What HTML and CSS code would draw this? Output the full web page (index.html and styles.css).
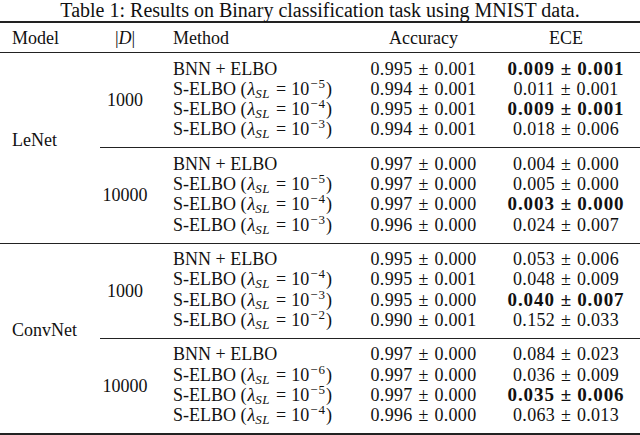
FILE: index.html
```html
<!DOCTYPE html>
<html>
<head>
<meta charset="utf-8">
<link rel="stylesheet" href="styles.css">
</head>
<body>
<div class="caption">Table 1: Results on Binary classification task using MNIST data.</div>
<table class="results">
  <colgroup>
    <col class="w-model"><col class="w-size"><col class="w-method"><col class="w-acc"><col class="w-ece">
  </colgroup>
  <thead>
    <tr>
      <th class="c-model">Model</th>
      <th class="c-size">|<i class="cal">D</i>|</th>
      <th class="c-method">Method</th>
      <th class="c-num">Accuracy</th>
      <th class="c-num">ECE</th>
    </tr>
  </thead>
  <tbody>
    <tr class="gstart">
      <td rowspan="8" class="c-model">LeNet</td>
      <td rowspan="4" class="c-size">1000</td>
      <td class="c-method">BNN + ELBO</td>
      <td class="c-num"><span class="m">0.995<span class="pm">±</span>0.001</span></td>
      <td class="c-num"><span class="m b">0.009<span class="pm">±</span>0.001</span></td>
    </tr>
    <tr>
      <td class="c-method">S-ELBO (<i class="lam">λ</i><sub>SL</sub><span class="eq">=</span>10<sup>−5</sup>)</td>
      <td class="c-num"><span class="m">0.994<span class="pm">±</span>0.001</span></td>
      <td class="c-num"><span class="m">0.011<span class="pm">±</span>0.001</span></td>
    </tr>
    <tr>
      <td class="c-method">S-ELBO (<i class="lam">λ</i><sub>SL</sub><span class="eq">=</span>10<sup>−4</sup>)</td>
      <td class="c-num"><span class="m">0.995<span class="pm">±</span>0.001</span></td>
      <td class="c-num"><span class="m b">0.009<span class="pm">±</span>0.001</span></td>
    </tr>
    <tr class="gend">
      <td class="c-method">S-ELBO (<i class="lam">λ</i><sub>SL</sub><span class="eq">=</span>10<sup>−3</sup>)</td>
      <td class="c-num"><span class="m">0.994<span class="pm">±</span>0.001</span></td>
      <td class="c-num"><span class="m">0.018<span class="pm">±</span>0.006</span></td>
    </tr>
    <tr class="gstart sub">
      <td rowspan="4" class="c-size">10000</td>
      <td class="c-method">BNN + ELBO</td>
      <td class="c-num"><span class="m">0.997<span class="pm">±</span>0.000</span></td>
      <td class="c-num"><span class="m">0.004<span class="pm">±</span>0.000</span></td>
    </tr>
    <tr>
      <td class="c-method">S-ELBO (<i class="lam">λ</i><sub>SL</sub><span class="eq">=</span>10<sup>−5</sup>)</td>
      <td class="c-num"><span class="m">0.997<span class="pm">±</span>0.000</span></td>
      <td class="c-num"><span class="m">0.005<span class="pm">±</span>0.000</span></td>
    </tr>
    <tr>
      <td class="c-method">S-ELBO (<i class="lam">λ</i><sub>SL</sub><span class="eq">=</span>10<sup>−4</sup>)</td>
      <td class="c-num"><span class="m">0.997<span class="pm">±</span>0.000</span></td>
      <td class="c-num"><span class="m b">0.003<span class="pm">±</span>0.000</span></td>
    </tr>
    <tr class="gend">
      <td class="c-method">S-ELBO (<i class="lam">λ</i><sub>SL</sub><span class="eq">=</span>10<sup>−3</sup>)</td>
      <td class="c-num"><span class="m">0.996<span class="pm">±</span>0.000</span></td>
      <td class="c-num"><span class="m">0.024<span class="pm">±</span>0.007</span></td>
    </tr>
  </tbody>
  <tbody>
    <tr class="gstart">
      <td rowspan="8" class="c-model">ConvNet</td>
      <td rowspan="4" class="c-size">1000</td>
      <td class="c-method">BNN + ELBO</td>
      <td class="c-num"><span class="m">0.995<span class="pm">±</span>0.000</span></td>
      <td class="c-num"><span class="m">0.053<span class="pm">±</span>0.006</span></td>
    </tr>
    <tr>
      <td class="c-method">S-ELBO (<i class="lam">λ</i><sub>SL</sub><span class="eq">=</span>10<sup>−4</sup>)</td>
      <td class="c-num"><span class="m">0.995<span class="pm">±</span>0.001</span></td>
      <td class="c-num"><span class="m">0.048<span class="pm">±</span>0.009</span></td>
    </tr>
    <tr>
      <td class="c-method">S-ELBO (<i class="lam">λ</i><sub>SL</sub><span class="eq">=</span>10<sup>−3</sup>)</td>
      <td class="c-num"><span class="m">0.995<span class="pm">±</span>0.000</span></td>
      <td class="c-num"><span class="m b">0.040<span class="pm">±</span>0.007</span></td>
    </tr>
    <tr class="gend">
      <td class="c-method">S-ELBO (<i class="lam">λ</i><sub>SL</sub><span class="eq">=</span>10<sup>−2</sup>)</td>
      <td class="c-num"><span class="m">0.990<span class="pm">±</span>0.001</span></td>
      <td class="c-num"><span class="m">0.152<span class="pm">±</span>0.033</span></td>
    </tr>
    <tr class="gstart sub">
      <td rowspan="4" class="c-size">10000</td>
      <td class="c-method">BNN + ELBO</td>
      <td class="c-num"><span class="m">0.997<span class="pm">±</span>0.000</span></td>
      <td class="c-num"><span class="m">0.084<span class="pm">±</span>0.023</span></td>
    </tr>
    <tr>
      <td class="c-method">S-ELBO (<i class="lam">λ</i><sub>SL</sub><span class="eq">=</span>10<sup>−6</sup>)</td>
      <td class="c-num"><span class="m">0.997<span class="pm">±</span>0.000</span></td>
      <td class="c-num"><span class="m">0.036<span class="pm">±</span>0.009</span></td>
    </tr>
    <tr>
      <td class="c-method">S-ELBO (<i class="lam">λ</i><sub>SL</sub><span class="eq">=</span>10<sup>−5</sup>)</td>
      <td class="c-num"><span class="m">0.997<span class="pm">±</span>0.000</span></td>
      <td class="c-num"><span class="m b">0.035<span class="pm">±</span>0.006</span></td>
    </tr>
    <tr class="gend last">
      <td class="c-method">S-ELBO (<i class="lam">λ</i><sub>SL</sub><span class="eq">=</span>10<sup>−4</sup>)</td>
      <td class="c-num"><span class="m">0.996<span class="pm">±</span>0.000</span></td>
      <td class="c-num"><span class="m">0.063<span class="pm">±</span>0.013</span></td>
    </tr>
  </tbody>
</table>
</body>
</html>
```

FILE: styles.css
```css
html, body {
  margin: 0;
  padding: 0;
  background: #fff;
}
body {
  font-family: "Liberation Serif", "Times New Roman", serif;
  font-size: 18px;
  color: #111;
  width: 640px;
  overflow: hidden;
}
.caption {
  text-align: center;
  font-size: 20px;
  height: 21px;
  line-height: 21px;
  white-space: nowrap;
}
.results {
  width: 640px;
  border-collapse: collapse;
  table-layout: fixed;
  border-top: 2px solid #222;
  border-bottom: 2px solid #222;
}
.w-model { width: 100px; }
.w-size { width: 50px; }
.w-method { width: 205px; }
.w-acc { width: 137px; }
.w-ece { width: 148px; }

.results th {
  font-weight: normal;
  height: 29px;
  padding: 0;
  line-height: 20px;
  border-bottom: 1px solid #222;
  vertical-align: middle;
}
.results td {
  padding: 0;
  line-height: 20.33px;
  vertical-align: middle;
  white-space: nowrap;
}
.results .c-model {
  text-align: left;
  padding-left: 12px;
}
.results td.c-model {
  padding-bottom: 16px;
}
.results .c-size {
  text-align: center;
}
.results .c-method {
  text-align: left;
  padding-left: 23px;
}
.results .c-num {
  text-align: center;
}
.results tr.gstart td {
  padding-top: 5.5px;
}
.results tr.gstart td[rowspan] {
  padding-top: 0;
}
.results tr.gend td {
  padding-bottom: 7.5px;
}
.results tr.gstart.sub td {
  border-top: 1px solid #222;
}
.results tbody + tbody tr.gstart td {
  border-top: 1px solid #222;
}
.cal {
  font-style: italic;
}
.m {
  font-family: "Liberation Serif", serif;
  letter-spacing: 0.3px;
}
.m.b {
  font-weight: bold;
  font-size: 19px;
  letter-spacing: 0.9px;
}
.pm {
  display: inline-block;
  margin: 0 6px;
  letter-spacing: 0;
}
.m.b .pm {
  margin: 0 6px;
}
.lam {
  font-style: italic;
  margin-left: 1px;
}
sub, sup {
  font-size: 13px;
  line-height: 0;
}
sub {
  font-style: italic;
  vertical-align: -3px;
  letter-spacing: 0.5px;
}
sup {
  vertical-align: 7px;
  margin-left: 1px;
  letter-spacing: 1px;
}
.eq {
  display: inline-block;
  margin: 0 5px 0 6px;
}
```
